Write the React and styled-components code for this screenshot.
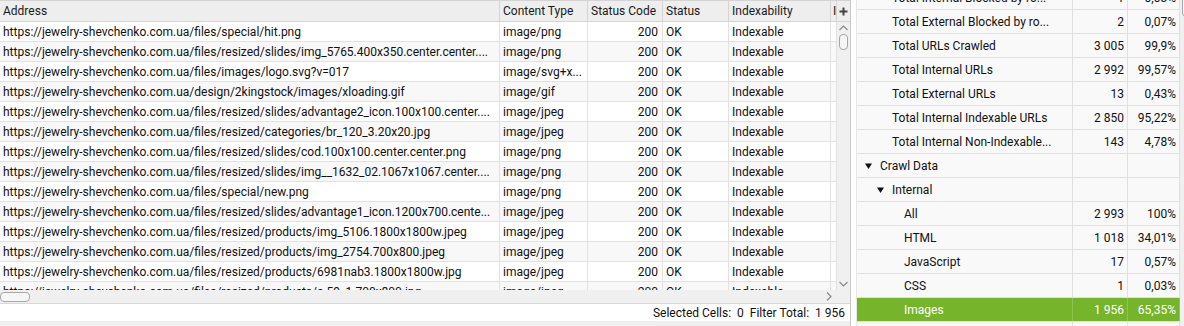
import React from "react";
import styled, { createGlobalStyle } from "styled-components";

const GlobalStyle = createGlobalStyle`
  html, body {
    margin: 0;
    padding: 0;
    background: #ffffff;
  }
  body {
    font-family: Roboto, "Liberation Sans", Arial, sans-serif;
    color: #111;
  }
`;

const urlRows = [
  ["https://jewelry-shevchenko.com.ua/files/special/hit.png", "image/png"],
  ["https://jewelry-shevchenko.com.ua/files/resized/slides/img_5765.400x350.center.center....", "image/png"],
  ["https://jewelry-shevchenko.com.ua/files/images/logo.svg?v=017", "image/svg+x..."],
  ["https://jewelry-shevchenko.com.ua/design/2kingstock/images/xloading.gif", "image/gif"],
  ["https://jewelry-shevchenko.com.ua/files/resized/slides/advantage2_icon.100x100.center....", "image/jpeg"],
  ["https://jewelry-shevchenko.com.ua/files/resized/categories/br_120_3.20x20.jpg", "image/jpeg"],
  ["https://jewelry-shevchenko.com.ua/files/resized/slides/cod.100x100.center.center.png", "image/png"],
  ["https://jewelry-shevchenko.com.ua/files/resized/slides/img__1632_02.1067x1067.center....", "image/png"],
  ["https://jewelry-shevchenko.com.ua/files/special/new.png", "image/png"],
  ["https://jewelry-shevchenko.com.ua/files/resized/slides/advantage1_icon.1200x700.cente...", "image/jpeg"],
  ["https://jewelry-shevchenko.com.ua/files/resized/products/img_5106.1800x1800w.jpeg", "image/jpeg"],
  ["https://jewelry-shevchenko.com.ua/files/resized/products/img_2754.700x800.jpeg", "image/jpeg"],
  ["https://jewelry-shevchenko.com.ua/files/resized/products/6981nab3.1800x1800w.jpg", "image/jpeg"],
  ["https://jewelry-shevchenko.com.ua/files/resized/products/c-59_1.700x800.jpg", "image/jpeg"],
];

const overview = [
  { label: "Total Internal Blocked by ro...", count: "1", pct: "0,03%", level: 1 },
  { label: "Total External Blocked by ro...", count: "2", pct: "0,07%", level: 1 },
  { label: "Total URLs Crawled", count: "3 005", pct: "99,9%", level: 1 },
  { label: "Total Internal URLs", count: "2 992", pct: "99,57%", level: 1 },
  { label: "Total External URLs", count: "13", pct: "0,43%", level: 1 },
  { label: "Total Internal Indexable URLs", count: "2 850", pct: "95,22%", level: 1 },
  { label: "Total Internal Non-Indexable...", count: "143", pct: "4,78%", level: 1 },
  { label: "Crawl Data", level: 0, open: true },
  { label: "Internal", level: 1, open: true },
  { label: "All", count: "2 993", pct: "100%", level: 2 },
  { label: "HTML", count: "1 018", pct: "34,01%", level: 2 },
  { label: "JavaScript", count: "17", pct: "0,57%", level: 2 },
  { label: "CSS", count: "1", pct: "0,03%", level: 2 },
  { label: "Images", count: "1 956", pct: "65,35%", level: 2, selected: true },
  { label: "Media", count: "0", pct: "0%", level: 2 },
];

const COLS = "500px 88px 75px 66px 102px 6px";

export default function App() {
  return (
    <>
      <GlobalStyle />
      <Screen>
        <LeftPanel>
          <TableArea>
            <Grid>
              <HeaderRow>
                <HeadCell>Address</HeadCell>
                <HeadCell>Content Type</HeadCell>
                <HeadCell>Status Code</HeadCell>
                <HeadCell>Status</HeadCell>
                <HeadCell>Indexability</HeadCell>
                <HeadCell $clip>Indexability Status</HeadCell>
              </HeaderRow>
              <Body>
                {urlRows.map(([url, type], i) => (
                  <Row key={i}>
                    <Cell>{url}</Cell>
                    <Cell>{type}</Cell>
                    <Cell $right>200</Cell>
                    <Cell>OK</Cell>
                    <Cell>Indexable</Cell>
                    <Cell />
                  </Row>
                ))}
              </Body>
            </Grid>
            <VScroll>
              <Corner>
                <svg width="9" height="9" viewBox="0 0 9 9">
                  <path d="M4.5 0.5v8M0.5 4.5h8" stroke="#444" strokeWidth="2" />
                </svg>
              </Corner>
              <Track>
                <Chevron viewBox="0 0 9 6">
                  <path d="M0.5 5L4.5 1L8.5 5" />
                </Chevron>
                <VThumb />
                <Spacer />
                <Chevron viewBox="0 0 9 6">
                  <path d="M0.5 1L4.5 5L8.5 1" />
                </Chevron>
              </Track>
            </VScroll>
          </TableArea>
          <HScroll>
            <HThumb />
            <Spacer />
            <Chevron viewBox="0 0 6 9" $h>
              <path d="M1 0.5L5 4.5L1 8.5" />
            </Chevron>
            <HCorner />
          </HScroll>
          <StatusBar>
            <span>Selected Cells:&nbsp; 0</span>
            <span>Filter Total:&nbsp; 1 956</span>
          </StatusBar>
          <BottomStrip />
        </LeftPanel>
        <Splitter />
        <RightPanel>
          <Tree>
            {overview.map((r, i) => (
              <TreeRow key={i} $selected={r.selected}>
                <Label $level={r.level}>
                  <ArrowSlot>
                    {r.open && (
                      <svg width="7" height="6" viewBox="0 0 7 6">
                        <path d="M0 0.5H7L3.5 6Z" fill="#111" />
                      </svg>
                    )}
                  </ArrowSlot>
                  <span>{r.label}</span>
                </Label>
                <Num>{r.count}</Num>
                <Num>{r.pct}</Num>
              </TreeRow>
            ))}
          </Tree>
          <SideScroll>
            <SideThumb />
          </SideScroll>
        </RightPanel>
      </Screen>
    </>
  );
}

const Screen = styled.div`
  display: flex;
  width: 1184px;
  height: 326px;
  overflow: hidden;
  background: #ffffff;
`;

const LeftPanel = styled.div`
  width: 850px;
  border-right: 1px solid #c9c9c9;
  display: flex;
  flex-direction: column;
  flex-shrink: 0;
`;

const TableArea = styled.div`
  display: flex;
  height: 290px;
  border-top: 1px solid #d4d4d4;
  box-sizing: border-box;
  overflow: hidden;
`;

const Grid = styled.div`
  width: 837px;
  display: flex;
  flex-direction: column;
  overflow: hidden;
  font-size: 12px;
`;

const HeaderRow = styled.div`
  display: grid;
  grid-template-columns: ${COLS};
  height: 20px;
  background: #eeeeee;
  border-bottom: 1px solid #d4d4d4;
  flex-shrink: 0;
`;

const HeadCell = styled.div`
  display: flex;
  align-items: center;
  padding: 0 ${(p) => (p.$clip ? "0 0 2px" : "0 0 3px")};
  border-right: 1px solid #d4d4d4;
  color: #1a1a1a;
  white-space: nowrap;
  overflow: hidden;
`;

const Body = styled.div`
  background: #ffffff;
`;

const Row = styled.div`
  display: grid;
  grid-template-columns: ${COLS};
  height: 20px;
  box-sizing: border-box;
  border-bottom: 1px solid #e2e2e2;
  &:nth-child(even) {
    background: #f8f8f8;
  }
`;

const Cell = styled.div`
  display: flex;
  align-items: center;
  justify-content: ${(p) => (p.$right ? "flex-end" : "flex-start")};
  padding: ${(p) => (p.$right ? "0 4px 0 0" : "0 0 0 3px")};
  border-right: 1px solid #e2e2e2;
  white-space: nowrap;
  overflow: hidden;
  color: #111;
`;

const VScroll = styled.div`
  width: 13px;
  display: flex;
  flex-direction: column;
  background: #f0f0f0;
`;

const Corner = styled.div`
  height: 20px;
  display: flex;
  align-items: center;
  justify-content: center;
  background: #eeeeee;
  border-bottom: 1px solid #d4d4d4;
  flex-shrink: 0;
`;

const Track = styled.div`
  flex: 1;
  display: flex;
  flex-direction: column;
  align-items: center;
  padding: 3px 0 3px;
`;

const Chevron = styled.svg`
  width: ${(p) => (p.$h ? "6px" : "9px")};
  height: ${(p) => (p.$h ? "9px" : "6px")};
  flex-shrink: 0;
  path {
    fill: none;
    stroke: #8a8a8a;
    stroke-width: 1.2;
  }
`;

const VThumb = styled.div`
  width: 9px;
  height: 16px;
  margin-top: 3px;
  border: 1px solid #a6a6a6;
  border-radius: 4px;
  background: #f6f6f6;
  box-sizing: border-box;
`;

const Spacer = styled.div`
  flex: 1;
`;

const HScroll = styled.div`
  height: 14px;
  display: flex;
  align-items: center;
  background: #f0f0f0;
  border-bottom: 1px solid #d8d8d8;
  box-sizing: border-box;
`;

const HThumb = styled.div`
  width: 30px;
  height: 10px;
  border: 1px solid #a6a6a6;
  border-radius: 4px;
  background: #f6f6f6;
  box-sizing: border-box;
`;

const HCorner = styled.div`
  width: 13px;
  margin-left: 5px;
  height: 100%;
`;

const StatusBar = styled.div`
  height: 17px;
  display: flex;
  align-items: center;
  justify-content: flex-end;
  gap: 6px;
  padding-right: 5px;
  font-size: 12px;
  color: #111;
  background: #ffffff;
`;

const BottomStrip = styled.div`
  flex: 1;
  background: #efefef;
`;

const Splitter = styled.div`
  width: 5px;
  flex-shrink: 0;
  background: #ffffff;
`;

const RightPanel = styled.div`
  flex: 1;
  display: flex;
  overflow: hidden;
  background: #f9f9f9;
  border-left: 1px solid #e6e6e6;
`;

const Tree = styled.div`
  width: 323px;
  margin-top: -14px;
  font-size: 12px;
`;

const TreeRow = styled.div`
  display: grid;
  grid-template-columns: 216px 55px 52px;
  height: 24px;
  box-sizing: border-box;
  border-bottom: 1px solid #e0e0e0;
  background: ${(p) => (p.$selected ? "#76b52b" : "transparent")};
  color: ${(p) => (p.$selected ? "#ffffff" : "#111")};
  & > div {
    border-right: 1px solid ${(p) => (p.$selected ? "#8cc44d" : "#e0e0e0")};
  }
`;

const Label = styled.div`
  display: flex;
  align-items: center;
  padding-left: ${(p) => 8 + p.$level * 12}px;
  white-space: nowrap;
  overflow: hidden;
`;

const ArrowSlot = styled.span`
  width: 15px;
  flex-shrink: 0;
  display: flex;
  align-items: center;
`;

const Num = styled.div`
  display: flex;
  align-items: center;
  justify-content: flex-end;
  padding-right: 3px;
  white-space: nowrap;
`;

const SideScroll = styled.div`
  flex: 1;
  position: relative;
  background: #f0f0f0;
`;

const SideThumb = styled.div`
  position: absolute;
  left: 2px;
  top: -4px;
  width: 9px;
  height: 21px;
  border: 1px solid #a6a6a6;
  border-radius: 4px;
  background: #f6f6f6;
  box-sizing: border-box;
`;
